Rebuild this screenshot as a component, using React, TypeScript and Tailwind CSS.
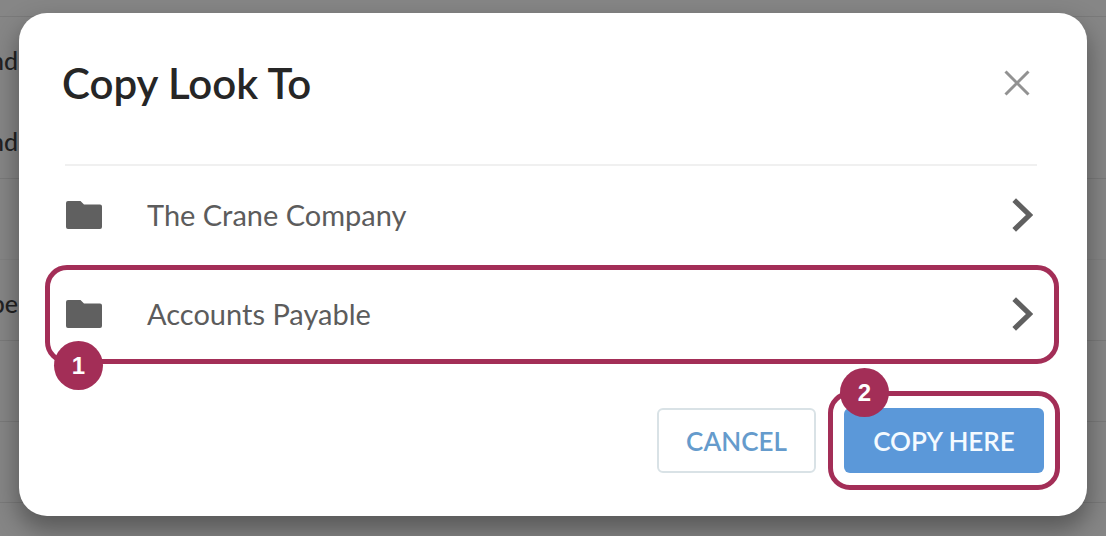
import type { ReactNode } from 'react';

const backgroundRows = [
  { text: 'nd', border: 'border-[#7a7a7a]' },
  { text: 'nd', border: 'border-transparent' },
  { text: '', border: 'border-[#7a7a7a]' },
  { text: 'pe', border: 'border-[#818181]' },
  { text: '', border: 'border-[#7a7a7a]' },
  { text: '', border: 'border-[#7a7a7a]' },
  { text: '', border: 'border-[#7a7a7a]' },
];

const folders = [
  { name: 'The Crane Company', step: null },
  { name: 'Accounts Payable', step: 1 },
];

function StepBadge({ children }: { children: ReactNode }) {
  return (
    <span className="flex size-[49px] items-center justify-center rounded-full bg-[#a32e57] font-['Liberation_Sans',sans-serif] text-2xl font-bold text-white">
      {children}
    </span>
  );
}

function FolderIcon() {
  return (
    <svg viewBox="0 0 36 28" className="h-7 w-9 shrink-0" aria-hidden="true">
      <path
        d="M2 0h12.5l3.5 3.4h16a2 2 0 0 1 2 2V26a2 2 0 0 1-2 2H2a2 2 0 0 1-2-2V2a2 2 0 0 1 2-2Z"
        fill="#606060"
      />
    </svg>
  );
}

function ChevronIcon() {
  return (
    <svg viewBox="0 0 21 34" className="h-[34px] w-[21px] shrink-0" aria-hidden="true">
      <path d="M2.2 2.2 17.5 17 2.2 31.8" fill="none" stroke="#606060" strokeWidth="5.2" />
    </svg>
  );
}

export default function App() {
  return (
    <div className="relative min-h-screen overflow-hidden bg-[#868686] font-[Lato,sans-serif]">
      <div className="absolute inset-0 pt-4" aria-hidden="true">
        {backgroundRows.map((row, i) => (
          <div
            key={i}
            className={`flex h-[81px] items-center border-t pt-2 text-[25px] font-medium text-[#222222] ${row.border}`}
          >
            <span className="flex w-[18px] justify-end">{row.text}</span>
          </div>
        ))}
      </div>

      <main
        role="dialog"
        aria-labelledby="dialog-title"
        className="relative mx-[19px] mt-[13px] mb-5 rounded-[28px] bg-white pt-[41px] pr-[43px] pb-[43px] pl-[46px] shadow-[0_12px_24px_2px_rgba(0,0,0,0.34)]"
      >
        <header className="mr-[7px] flex h-28 items-start justify-between border-b-2 border-[#f0f0f0]">
          <h1 id="dialog-title" className="-ml-[3px] text-[42px] leading-[58px] font-semibold text-[#262626]">
            Copy Look To
          </h1>
          <button type="button" aria-label="Close" className="mt-4 mr-[7px]">
            <svg viewBox="0 0 26 26" className="size-[26px]" aria-hidden="true">
              <path d="m1.5 1.5 23 23m0-23-23 23" stroke="#929292" strokeWidth="3" />
            </svg>
          </button>
        </header>

        <ul className="mr-[7px]">
          {folders.map((folder) => (
            <li key={folder.name} className="relative">
              <button
                type="button"
                className="flex h-[99px] w-full items-center pr-1 pb-0.5 pl-px text-left text-[29px] text-[#5c5c5c]"
              >
                <FolderIcon />
                <span className="ml-[45px] flex-1">{folder.name}</span>
                <ChevronIcon />
              </button>
              {folder.step && (
                <>
                  <span className="pointer-events-none absolute inset-y-0 -right-[22px] -left-5 rounded-[22px] border-5 border-[#a32e57]" />
                  <span className="absolute -bottom-[26px] -left-[11px]">
                    <StepBadge>{folder.step}</StepBadge>
                  </span>
                </>
              )}
            </li>
          ))}
        </ul>

        <footer className="mt-11 flex justify-end gap-7">
          <button
            type="button"
            className="h-[65px] w-[159px] rounded-md border-2 border-[#d9e2e6] pt-0.5 text-[26px] font-semibold text-[#659bcc]"
          >
            CANCEL
          </button>
          <div className="relative">
            <button
              type="button"
              className="h-[65px] w-[200px] rounded-md bg-[#5b98d9] pt-0.5 text-[26px] font-semibold text-[#f4faff]"
            >
              COPY HERE
            </button>
            <span className="pointer-events-none absolute -inset-x-4 -inset-y-[17px] rounded-[22px] border-5 border-[#a32e57]" />
            <span className="absolute -top-10 -left-1">
              <StepBadge>2</StepBadge>
            </span>
          </div>
        </footer>
      </main>
    </div>
  );
}
